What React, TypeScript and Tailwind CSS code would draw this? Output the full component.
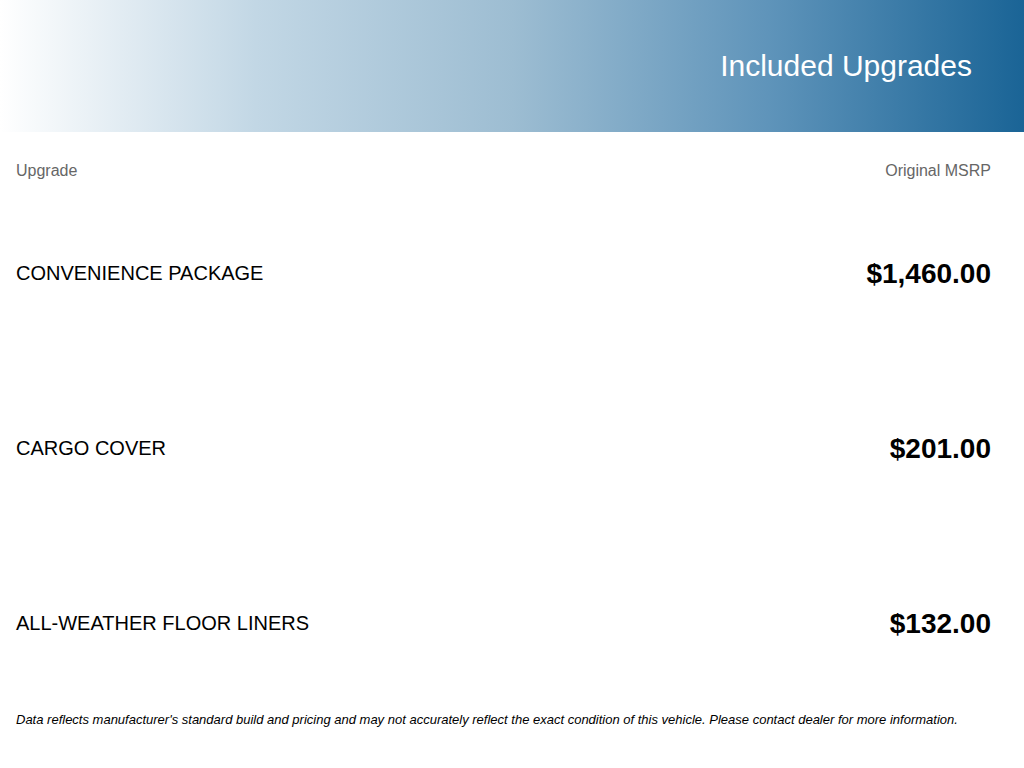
import React from "react";

const items = [
  { name: "CONVENIENCE PACKAGE", price: "$1,460.00" },
  { name: "CARGO COVER", price: "$201.00" },
  { name: "ALL-WEATHER FLOOR LINERS", price: "$132.00" },
];

export default function App() {
  return (
    <div className="w-[1024px] h-[768px] bg-white font-['Liberation_Sans',Arial,sans-serif] text-black overflow-hidden">
      <div className="h-[132px] flex items-center justify-end pr-[52px] bg-[linear-gradient(to_right,#ffffff_0%,#c2d7e5_25%,#9dbdd2_50%,#5f94ba_75%,#1a6496_100%)]">
        <h1 className="text-[30px] leading-[34px] text-white font-normal">Included Upgrades</h1>
      </div>
      <div className="pl-4 pr-[33px]">
        <div className="h-[54px] pt-[30px] flex justify-between text-[16px] leading-[18px] text-[#666]">
          <span>Upgrade</span>
          <span>Original MSRP</span>
        </div>
        {items.map((it) => (
          <div key={it.name} className="h-[175px] flex items-center justify-between">
            <span className="text-[20px] leading-[23px]">{it.name}</span>
            <span className="text-[28px] leading-[32px] font-bold">{it.price}</span>
          </div>
        ))}
        <p className="mt-[1px] text-[13px] leading-[15px] italic">
          Data reflects manufacturer's standard build and pricing and may not accurately reflect the exact condition of this vehicle. Please contact dealer for more information.
        </p>
      </div>
    </div>
  );
}
